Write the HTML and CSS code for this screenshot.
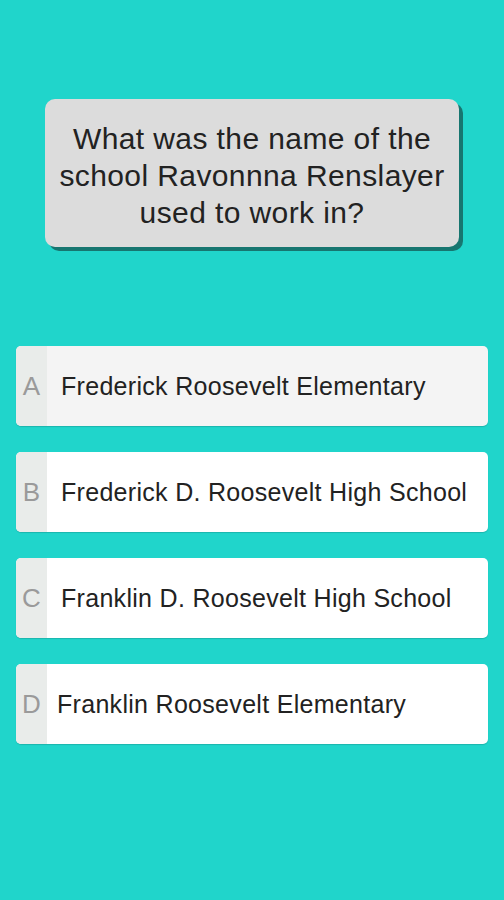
FILE: index.html
```html
<!DOCTYPE html>
<html>
<head>
<meta charset="utf-8">
<link rel="stylesheet" href="styles.css">
</head>
<body>
<div class="screen">
  <div class="question">What was the name of the school Ravonnna Renslayer used to work in?</div>
  <div class="answers">
    <div class="answer selected"><div class="letter">A</div><div class="text">Frederick Roosevelt Elementary</div></div>
    <div class="answer"><div class="letter">B</div><div class="text">Frederick D. Roosevelt High School</div></div>
    <div class="answer"><div class="letter">C</div><div class="text">Franklin D. Roosevelt High School</div></div>
    <div class="answer"><div class="letter">D</div><div class="text shift">Franklin Roosevelt Elementary</div></div>
  </div>
</div>
</body>
</html>
```
FILE: styles.css
```css
html, body {
  margin: 0;
  padding: 0;
}
body {
  background: #20d5cb;
  font-family: "Liberation Sans", Arial, sans-serif;
  width: 504px;
  height: 900px;
  overflow: hidden;
}
.screen {
  display: flex;
  flex-direction: column;
  align-items: center;
  padding-top: 99px;
}
.question {
  box-sizing: border-box;
  width: 414px;
  height: 148px;
  background: #dcdcdc;
  border-radius: 10px;
  box-shadow: 4px 4px 0 #177670;
  color: #222;
  font-size: 30px;
  letter-spacing: 0.4px;
  line-height: 37px;
  text-align: center;
  display: flex;
  align-items: center;
  justify-content: center;
  padding: 5px 4px 0;
}
.answers {
  margin-top: 99px;
  display: flex;
  flex-direction: column;
  gap: 26px;
  width: 472px;
}
.answer {
  height: 80px;
  background: #ffffff;
  border-radius: 5px;
  display: flex;
  align-items: center;
  overflow: hidden;
  box-shadow: 0 1px 1px rgba(0,0,0,0.15);
}
.answer.selected {
  background: #f4f4f4;
}
.letter {
  width: 31px;
  align-self: stretch;
  background: #e9ecea;
  color: #9a9a9a;
  font-size: 26px;
  display: flex;
  align-items: center;
  justify-content: center;
}
.text {
  margin-left: 14px;
  color: #222;
  font-size: 25px;
  letter-spacing: 0.3px;
  white-space: nowrap;
}
.text.shift {
  margin-left: 10px;
}
```
